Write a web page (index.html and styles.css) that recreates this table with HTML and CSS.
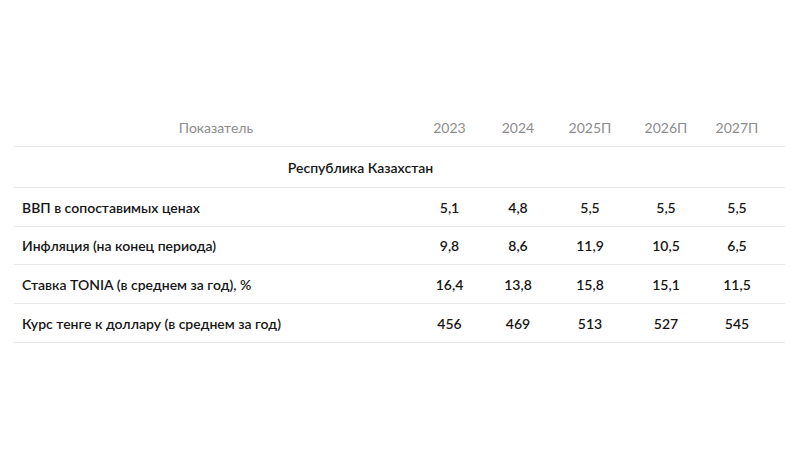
FILE: index.html
```html
<!DOCTYPE html>
<html lang="ru">
<head>
<meta charset="utf-8">
<link rel="stylesheet" href="styles.css">
</head>
<body>
<div class="page">
  <div class="table">
    <div class="row head">
      <div class="cell name">Показатель</div>
      <div class="cell">2023</div>
      <div class="cell">2024</div>
      <div class="cell">2025П</div>
      <div class="cell">2026П</div>
      <div class="cell">2027П</div>
    </div>
    <div class="row section">
      <div class="cell span">Республика Казахстан</div>
      <div class="cell"></div>
    </div>
    <div class="row">
      <div class="cell label">ВВП в сопоставимых ценах</div>
      <div class="cell">5,1</div>
      <div class="cell">4,8</div>
      <div class="cell">5,5</div>
      <div class="cell">5,5</div>
      <div class="cell">5,5</div>
    </div>
    <div class="row short">
      <div class="cell label">Инфляция (на конец периода)</div>
      <div class="cell">9,8</div>
      <div class="cell">8,6</div>
      <div class="cell">11,9</div>
      <div class="cell">10,5</div>
      <div class="cell">6,5</div>
    </div>
    <div class="row">
      <div class="cell label">Ставка TONIA (в среднем за год), %</div>
      <div class="cell">16,4</div>
      <div class="cell">13,8</div>
      <div class="cell">15,8</div>
      <div class="cell">15,1</div>
      <div class="cell">11,5</div>
    </div>
    <div class="row">
      <div class="cell label">Курс тенге к доллару (в среднем за год)</div>
      <div class="cell">456</div>
      <div class="cell">469</div>
      <div class="cell">513</div>
      <div class="cell">527</div>
      <div class="cell">545</div>
    </div>
  </div>
</div>
</body>
</html>
```
FILE: styles.css
```css
html, body {
  margin: 0;
  padding: 0;
  background: #ffffff;
}
body {
  font-family: "Lato", "Noto Sans", sans-serif;
  color: #161616;
}
.page {
  padding: 108px 15px 0 14px;
}
.table {
  width: 771px;
}
.row {
  display: grid;
  grid-template-columns: 404px 63px 74px 70px 82px 60px;
  padding-right: 18px;
  height: 38px;
  align-items: center;
  border-bottom: 1px solid #e8e8e8;
  font-size: 14px;
  font-weight: 600;
}
.row.short {
  height: 37px;
}
.row.head {
  color: #8c8c8c;
  font-weight: 400;
  font-size: 14px;
}
.row.section {
  height: 40px;
  grid-template-columns: 693px 60px;
}
.cell {
  text-align: center;
  white-space: nowrap;
}
.cell.label {
  text-align: left;
  padding-left: 8px;
}
.cell.span {
  text-align: center;
}
```
